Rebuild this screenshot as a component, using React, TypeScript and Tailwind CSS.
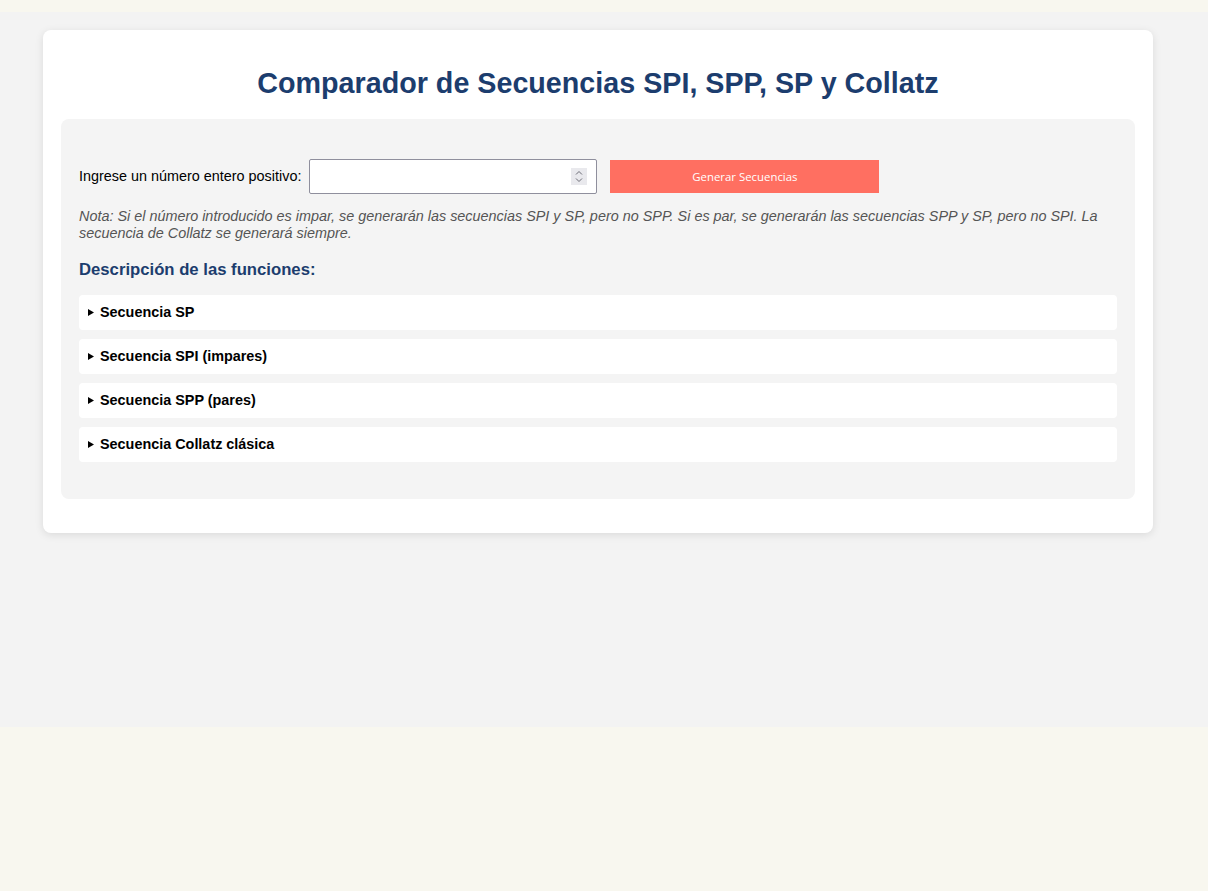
export default function App() {
  const items = [
    'Secuencia SP',
    'Secuencia SPI (impares)',
    'Secuencia SPP (pares)',
    'Secuencia Collatz clásica',
  ];

  return (
    <div className="min-h-[891px] bg-[#f8f7ef] pt-[12px] font-['Liberation_Sans',Arial,sans-serif]">
      <div className="h-[715px] bg-[#f3f3f3] pt-[18px]">
        <div className="ml-[43px] w-[1110px] rounded-lg bg-white px-[18px] pt-[18px] pb-[34px] shadow-[0_2px_8px_rgba(0,0,0,0.1)]">
          <h1 className="mt-[18px] mb-[19px] text-center text-[28.7px] font-bold leading-[34px] text-[#1c3d6e]">
            Comparador de Secuencias SPI, SPP, SP y Collatz
          </h1>

          <div className="rounded-lg bg-[#f4f4f4] px-[18px] pt-[40px] pb-[37px]">
            <div className="flex items-center">
              <label className="text-[14.4px] text-black">Ingrese un número entero positivo:</label>
              <div className="relative ml-[8px] h-[35px] w-[288px]">
                <input
                  type="text"
                  className="h-full w-full rounded-[2px] border border-[#8f8f9d] bg-white px-2 text-[14.4px] outline-none"
                />
                <div className="absolute right-[10px] top-[9px] flex h-[17px] w-[16px] items-center justify-center bg-[#e9e9ed]">
                  <svg width="8" height="13" viewBox="0 0 8 13" fill="none" stroke="#6b6b75" strokeWidth="1">
                    <path d="M1 4.5 L4 1.5 L7 4.5" />
                    <path d="M1 8.5 L4 11.5 L7 8.5" />
                  </svg>
                </div>
              </div>
              <button className="ml-[13px] h-[33px] w-[269px] bg-[#ff6f61] font-['Open_Sans',sans-serif] text-[11.4px] text-white">
                Generar Secuencias
              </button>
            </div>

            <p className="mt-[14px] text-[14.4px] italic leading-[17px] text-[#555]">
              Nota: Si el número introducido es impar, se generarán las secuencias SPI y SP, pero no SPP. Si es par, se generarán las secuencias SPP y SP, pero no SPI. La secuencia de Collatz se generará siempre.
            </p>

            <h3 className="mt-[18px] mb-[15px] text-[16.7px] font-bold leading-[20px] text-[#1c3d6e]">
              Descripción de las funciones:
            </h3>

            <div className="flex flex-col gap-[9px]">
              {items.map((t) => (
                <details key={t} className="rounded bg-white">
                  <summary className="flex cursor-pointer list-none items-center px-[9px] py-[8px] text-[14.4px] font-bold leading-[19px] text-black [&::-webkit-details-marker]:hidden">
                    <svg width="6" height="7" viewBox="0 0 6 7" className="mr-[6px]">
                      <path d="M0 0 L6 3.5 L0 7 Z" fill="#000" />
                    </svg>
                    {t}
                  </summary>
                </details>
              ))}
            </div>
          </div>
        </div>
      </div>
    </div>
  );
}
